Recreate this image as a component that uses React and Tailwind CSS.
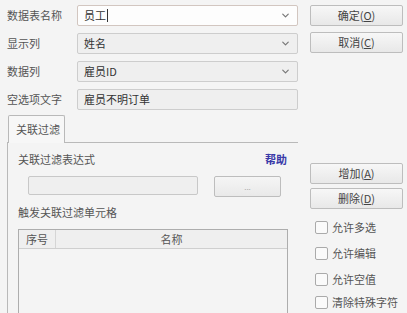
import { ChevronDown } from "lucide-react";

const font = { fontFamily: '"Microsoft YaHei", "Noto Sans CJK SC", "Noto Sans", sans-serif' };

function Field({ label, children }) {
  return (
    <div className="flex items-center h-[21px]">
      <div className="w-[70px] text-[#555] shrink-0">{label}</div>
      {children}
    </div>
  );
}

function SelectBox({ value, white, caret }) {
  return (
    <div
      className={`w-[221px] h-[21px] flex items-center justify-between border rounded-[2px] pl-[6px] pr-[6px] text-[#333] ${
        white ? "bg-[#fdfdfd] border-[#d2c6c0]" : "bg-[#efefef] border-[#cdcdcd]"
      }`}
    >
      <span className="flex items-center">
        {value}
        {caret && <span className="inline-block w-px h-[13px] bg-[#333] ml-[1px]" />}
      </span>
      <ChevronDown size={11} strokeWidth={2.6} className="text-[#777]" />
    </div>
  );
}

function Btn({ label, keyChar, className = "" }) {
  return (
    <div
      className={`w-[93px] h-[21px] flex items-center justify-center border border-[#bdbdbd] rounded-[2px] bg-gradient-to-b from-[#f7f7f7] to-[#e8e8e8] text-[#444] ${className}`}
    >
      {label}(<span className="underline">{keyChar}</span>)
    </div>
  );
}

function Check({ label, className = "" }) {
  return (
    <div className={`flex items-center h-[14px] ${className}`}>
      <div className="w-[13px] h-[13px] border border-[#aaa] rounded-[2px] bg-[#fafafa]" />
      <span className="ml-[4px] text-[#555]">{label}</span>
    </div>
  );
}

export default function App() {
  return (
    <div
      className="w-[407px] h-[313px] overflow-hidden bg-[#f4f4f4] text-[11px] leading-none flex"
      style={font}
    >
      {/* Left column */}
      <div className="w-[298px] pl-[7px] pt-[5px] flex flex-col">
        <div className="flex flex-col gap-[7px]">
          <Field label="数据表名称">
            <SelectBox value="员工" white caret />
          </Field>
          <Field label="显示列">
            <SelectBox value="姓名" />
          </Field>
          <Field label="数据列">
            <SelectBox value="雇员ID" />
          </Field>
          <Field label="空选项文字">
            <div className="w-[221px] h-[21px] flex items-center border border-[#cdcdcd] rounded-[2px] bg-[#efefef] pl-[6px] text-[#333]">
              雇员不明订单
            </div>
          </Field>
        </div>

        {/* Tab */}
        <div className="mt-[5px] flex">
          <div className="ml-[1px] w-[57px] h-[28px] border border-b-0 border-[#b9b9b9] rounded-t-[2px] bg-[#f7f7f7] flex items-center pl-[7px] text-[#555] -mb-px relative z-10">
            关联过滤
          </div>
        </div>
        <div className="flex-1 border-l border-t border-[#b9b9b9] pl-[10px] pr-[11px] pt-[9px]">
          <div className="flex justify-between items-center h-[14px]">
            <span className="text-[#555]">关联过滤表达式</span>
            <span className="text-[#3a3aa8] font-bold">帮助</span>
          </div>
          <div className="flex items-start mt-[10px] ml-[10px]">
            <div className="w-[170px] h-[19px] border border-[#c8c8c8] rounded-[2px] bg-[#efefef]" />
            <div className="ml-[16px] w-[67px] h-[21px] border border-[#bdbdbd] rounded-[2px] bg-gradient-to-b from-[#f5f5f5] to-[#e9e9e9] flex items-center justify-center text-[#aaa] text-[8px]">
              ...
            </div>
          </div>
          <div className="mt-[10px] h-[14px] text-[#555]">触发关联过滤单元格</div>
          <div className="mt-[8px] w-[270px] h-[120px] border border-[#adadad] bg-[#f4f4f4]">
            <div className="flex h-[19px] border-b border-[#cfcfcf] bg-[#efefef] text-[#555]">
              <div className="w-[37px] border-r border-[#d5d5d5] flex items-center justify-center">序号</div>
              <div className="flex-1 flex items-center justify-center">名称</div>
            </div>
          </div>
        </div>
      </div>

      {/* Right column */}
      <div className="ml-[12px] pt-[5px] flex flex-col">
        <Btn label="确定" keyChar="O" />
        <Btn label="取消" keyChar="C" className="mt-[6px]" />
        <Btn label="增加" keyChar="A" className="mt-[110px]" />
        <Btn label="删除" keyChar="D" className="mt-[4px]" />
        <div className="ml-[5px] mt-[11px] flex flex-col">
          <Check label="允许多选" />
          <Check label="允许编辑" className="mt-[12px]" />
          <Check label="允许空值" className="mt-[12px]" />
          <Check label="清除特殊字符" className="mt-[9px]" />
        </div>
      </div>
    </div>
  );
}
